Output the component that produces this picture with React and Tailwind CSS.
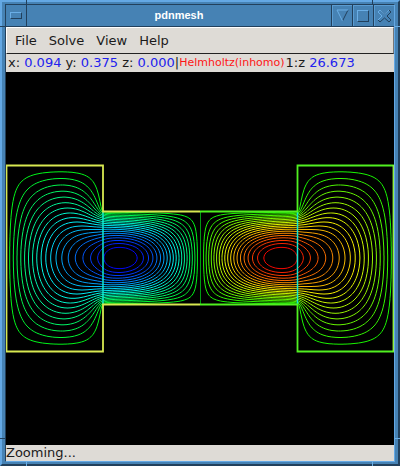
import React from "react";

// the plate: two 97x186 blocks joined by a 195x92 neck, mirrored at x = 195
const HALF = 194;
const MID = 93;
const BLOCK = 97;
const NECK = 47;
const STEPS = 19;

const inside = (x, y) =>
  x > 0 && y > 0 && x < HALF && (x < BLOCK || y > MID - NECK);

function solveField() {
  const w = HALF + 1;
  const h = MID + 1;
  let u = new Float64Array(w * h);
  for (let y = 0; y < h; y++) {
    for (let x = 0; x < w; x++) if (inside(x, y)) u[y * w + x] = 1;
  }
  for (let round = 0; round < 5; round++) {
    const src = u.map((v, i) => v * (i % w >= BLOCK ? 2.15 : 1));
    for (let it = 0; it < 260; it++) {
      for (let y = 1; y < h; y++) {
        for (let x = 1; x < w - 1; x++) {
          if (!inside(x, y)) continue;
          const i = y * w + x;
          const below = y === h - 1 ? u[i - w] : u[i + w];
          const next = (u[i - 1] + u[i + 1] + u[i - w] + below + src[i] * 0.001) / 4;
          u[i] += 1.94 * (next - u[i]);
        }
      }
    }
    let max = 0;
    u.forEach((v) => (max = Math.max(max, v)));
    u = u.map((v) => v / max);
  }
  return { u, w, h };
}

function contourPath({ u, w, h }, level) {
  const links = new Map();
  const points = new Map();
  const cut = (a, b) => {
    const key = a * 100000 + b;
    if (!points.has(key)) {
      const t = (level - u[a]) / (u[b] - u[a]);
      const ax = a % w;
      const ay = Math.floor(a / w);
      const bx = b % w;
      const by = Math.floor(b / w);
      points.set(key, [ax + (bx - ax) * t, ay + (by - ay) * t]);
      links.set(key, []);
    }
    return key;
  };
  for (let y = 0; y < h - 1; y++) {
    for (let x = 0; x < w - 1; x++) {
      const a = y * w + x;
      const edges = [
        [a, a + 1],
        [a + 1, a + w + 1],
        [a + w, a + w + 1],
        [a, a + w],
      ].filter(([p, q]) => u[p] > level !== u[q] > level);
      for (let e = 0; e + 1 < edges.length; e += 2) {
        const p = cut(...edges[e]);
        const q = cut(...edges[e + 1]);
        links.get(p).push(q);
        links.get(q).push(p);
      }
    }
  }
  let d = "";
  const seen = new Set();
  for (const [start, next] of links) {
    if (next.length !== 1 || seen.has(start)) continue;
    const line = [];
    let key = start;
    while (key !== undefined) {
      seen.add(key);
      line.push(points.get(key));
      key = links.get(key).find((k) => !seen.has(k));
    }
    const full = [
      ...line,
      ...line.map(([px, py]) => [px, 2 * MID - py]).reverse(),
    ];
    d += "M" + full.map((p) => p.map((v) => v.toFixed(1)).join(" ")).join("L") + "Z";
  }
  return d;
}

const field = solveField();
const contours = Array.from({ length: STEPS }, (_, i) => ({
  t: (i + 1) / STEPS,
  d: contourPath(field, (i + 1) / (STEPS + 1.2)),
}));

function Plot() {
  return (
    <svg viewBox="0 0 388 373" className="block w-full bg-black" fill="none" role="img" aria-label="Contour plot">
      <g transform="translate(0 93)">
        <g strokeWidth="1">
          {contours.map(({ t, d }) => (
            <g key={t}>
              <path d={d} stroke={`hsl(${120 + 118 * t} 100% 48%)`} />
              <path d={d} transform="translate(389 0) scale(-1 1)" stroke={`hsl(${120 - 118 * t} 100% 48%)`} />
            </g>
          ))}
          <path d="M194.5 47V139" stroke="#009a10" />
        </g>
        <path d="M97 47V139M291.500 47V139" stroke="#10e8d0" strokeWidth="1.5" />
        <g strokeWidth="1.8">
          <path d="M194 46.500H97V.5H.5V186.500H97V139.500H194" stroke="#d8e850" />
          <path d="M194 46.500H291.500V.5H388M194 139.500H291.500V186.500H388" stroke="#50f020" />
          <path d="M387.500 0V186.500" stroke="#90f040" />
        </g>
      </g>
    </svg>
  );
}

// grooves that part the corner grips from the sides of the frame
function FrameGrooves() {
  return (
    <div className="pointer-events-none absolute -inset-[2px]">
      <span className="absolute top-0 left-[26px] h-[5px] w-px bg-[#22405c]" />
      <span className="absolute top-0 right-[27px] h-[5px] w-px bg-[#22405c]" />
      <span className="absolute top-[26px] left-0 h-px w-[5px] bg-[#22405c]" />
      <span className="absolute top-[26px] right-0 h-px w-[5px] bg-[#6aaee6]" />
      <span className="absolute bottom-[27px] left-0 h-px w-[5px] bg-[#22405c]" />
      <span className="absolute right-0 bottom-[27px] h-px w-[5px] bg-[#6aaee6]" />
      <span className="absolute bottom-0 left-[26px] h-[5px] w-px bg-[#6aaee6]" />
      <span className="absolute right-[27px] bottom-0 h-[5px] w-px bg-[#6aaee6]" />
    </div>
  );
}

const titleButton =
  "flex h-full w-[21px] items-center justify-center border-l border-[#22405c] shadow-[inset_1px_1px_0_#5a9cd2]";

export default function App() {
  return (
    <div className="relative border-2 border-[#64a8e4] border-r-[#22405c] border-b-[#22405c] bg-[#4682b4] px-[3px] pt-[2px] pb-[2px] font-['DejaVu_Sans',sans-serif] text-[13px] text-[#1a1a1a]">
      <div className="border border-[#22405c] border-r-[#64a8e4] border-b-[#64a8e4]">
        <header className="flex h-[22px] items-center border-b border-[#22405c]">
          <button aria-label="Window menu" className="flex h-full w-[21px] items-center justify-center border-r border-[#22405c]">
            <span className="h-[7px] w-3 border border-[#6aaee6] border-r-[#22405c] border-b-[#22405c]" />
          </button>
          <h1 className="flex-1 text-center font-['Liberation_Sans',sans-serif] text-[11px] font-bold text-white">
            pdnmesh
          </h1>
          <button aria-label="Minimize" className={titleButton}>
            <svg width="13" height="13" fill="none">
              <path d="M12 1L6.500 12" stroke="#22405c" />
              <path d="M6.500 12L1 1H12" stroke="#6aaee6" />
            </svg>
          </button>
          <button aria-label="Maximize" className={titleButton}>
            <span className="h-3 w-3 border border-[#6aaee6] border-r-[#22405c] border-b-[#22405c]" />
          </button>
          <button aria-label="Close" className={titleButton}>
            <svg width="15" height="14" fill="none">
              <path d="M1 3L3 1L7.500 5L12 1L14 3L10 7L14 11L12 13L7.500 9L3 13L1 11L5 7Z" stroke="#22405c" />
              <path d="M1 11L5 7L1 3L3 1L7.500 5L12 1" stroke="#6aaee6" />
            </svg>
          </button>
        </header>
        <nav className="flex h-[27px] items-center gap-3 border border-white border-r-[#777] border-b-[#222] bg-[#dedbd6] px-2">
          <button>File</button>
          <button>Solve</button>
          <button>View</button>
          <button>Help</button>
        </nav>
        <div className="flex h-[18px] items-center bg-[#dedbd6] pl-[2px] whitespace-pre">
          <p>
            x: <span className="text-[#2222ee]">0.094</span> y:{" "}
            <span className="text-[#2222ee]">0.375</span> z:{" "}
            <span className="text-[#2222ee]">0.000</span>|
          </p>
          <p className="text-[11px] text-[#ff1515]">Helmholtz(inhomo)</p>
          <p className="pl-px">
            1:z <span className="text-[#2222ee]">26.673</span>
          </p>
        </div>
        <Plot />
        <footer className="flex h-4 items-center bg-[#dedbd6]">Zooming...</footer>
      </div>
      <FrameGrooves />
    </div>
  );
}
